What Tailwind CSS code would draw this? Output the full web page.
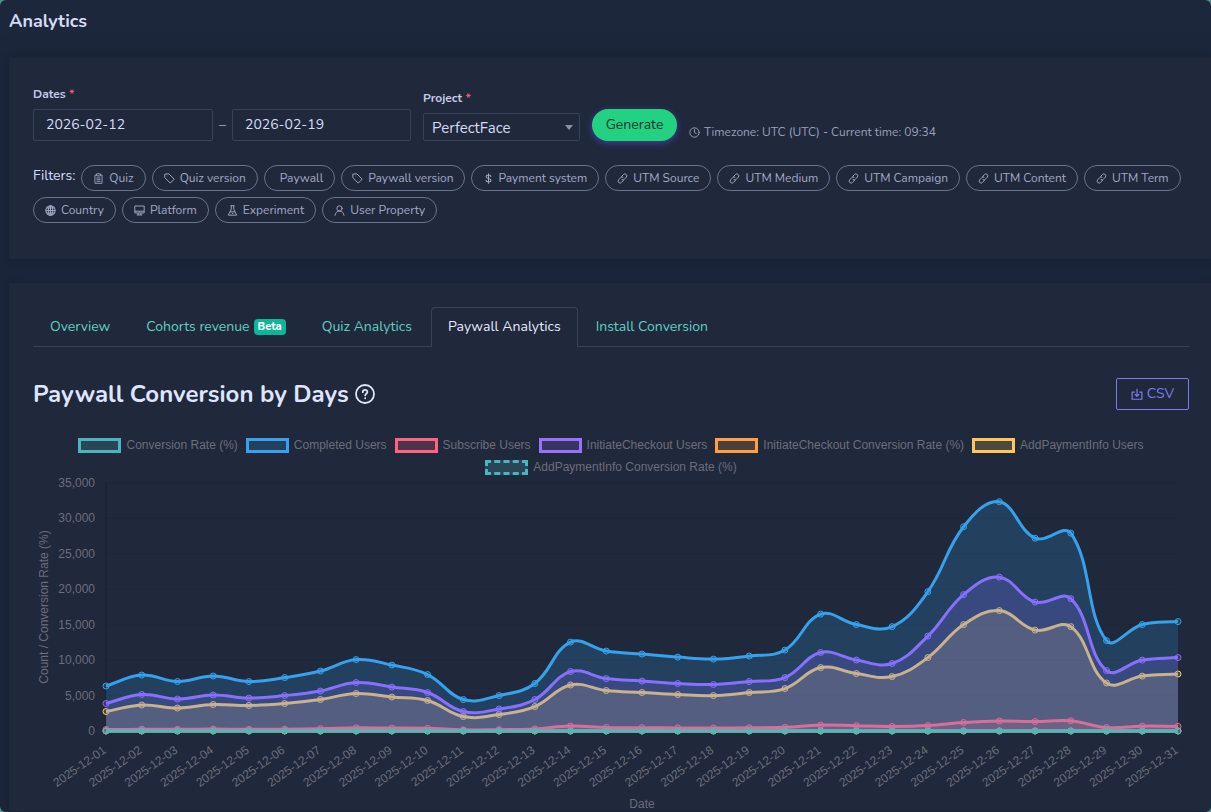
<!DOCTYPE html>
<html lang="en" class="bg-[#4f8f8c]">
<head>
    <meta charset="UTF-8">
    <meta name="viewport" content="width=device-width, initial-scale=1.0">
    <title>Analytics</title>
    <script src="https://cdn.jsdelivr.net/npm/@tailwindcss/browser@4"></script>
</head>
<body class="font-['Nunito',Lato,sans-serif] text-[#d5dcf5]">
    <!-- Icons -->
    <svg class="hidden">
        <symbol id="i-quiz" viewBox="0 0 16 16" fill="none" stroke="currentColor" stroke-width="1.3"><path d="M5 3H2.8v12h10.4V3H11M5.2 1.2h5.6v3H5.2zM5 7.2h6M5 9.7h6M5 12.2h6"/></symbol>
        <symbol id="i-tag" viewBox="0 0 16 16" fill="none" stroke="currentColor" stroke-width="1.4" stroke-linejoin="round"><path d="M1.2 1.7v5l7.8 8 5.8-5.8-7.8-7.7z"/><path d="M4.4 4.5h.4"/></symbol>
        <symbol id="i-dollar" viewBox="0 0 16 16" fill="none" stroke="currentColor" stroke-width="1.5" stroke-linecap="round"><path d="M11.500 5.200C11.200 3.800 10 3 8 3 5.800 3 4.600 4 4.600 5.400c0 3.400 7 1.500 7 5.100 0 1.500-1.400 2.500-3.600 2.500s-3.500-1-3.700-2.600M8 1v14"/></symbol>
        <symbol id="i-link" viewBox="0 0 16 16" fill="none" stroke="currentColor" stroke-width="1.3" stroke-linecap="round"><g transform="rotate(-48 8 8)"><path d="M7 10.800H2.800a2.800 2.800 0 0 1 0-5.600h4.400a2.800 2.800 0 0 1 2.600 2"/><path d="M9 5.200h4.200a2.800 2.800 0 0 1 0 5.600H8.800a2.800 2.800 0 0 1-2.600-2"/></g></symbol>
        <symbol id="i-globe" viewBox="0 0 16 16" fill="none" stroke="currentColor" stroke-width="1.5"><circle cx="8" cy="8" r="6.800"/><ellipse cx="8" cy="8" rx="3.200" ry="6.800"/><path d="M8 1v14M1 8h14M2.200 4.500h11.600M2.200 11.500h11.600"/></symbol>
        <symbol id="i-display" viewBox="0 0 16 16" fill="none" stroke="currentColor" stroke-width="1.4"><path d="M1.200 1.500h13.600v10H1.200zM1.200 9h13.600M6 11.500v3M10 11.500v3M4 14.500h8"/></symbol>
        <symbol id="i-flask" viewBox="0 0 16 16" fill="none" stroke="currentColor" stroke-width="1.400" stroke-linejoin="round"><path d="M5 1h6M6.200 1v5L2 14.800h12L9.800 6V1M4.300 10h7.400M7 12.500h2"/></symbol>
        <symbol id="i-user" viewBox="0 0 16 16" fill="none" stroke="currentColor" stroke-width="1.400" stroke-linecap="round"><circle cx="8" cy="5" r="3.800"/><path d="M1.500 15c.6-3.600 2.600-6.200 6.500-6.200s5.900 2.600 6.500 6.200"/></symbol>
        <symbol id="i-clock" viewBox="0 0 16 16" fill="none" stroke="currentColor" stroke-width="1.400" stroke-linecap="round"><circle cx="8" cy="8" r="6.800"/><path d="M8 3.800V8l2.600 1.600"/></symbol>
        <symbol id="i-download" viewBox="0 0 16 16" fill="none" stroke="currentColor" stroke-width="1.600" stroke-linejoin="round"><path d="M5 5.500H1.500V15h13V5.500H11M8 1v10M5 8.200L8 11l3-2.800"/></symbol>
        <symbol id="i-help" viewBox="0 0 20 20" fill="none" stroke="currentColor" stroke-width="1.8" stroke-linecap="round"><circle cx="10" cy="10" r="9"/><path d="M7.800 8.200c0-3 4.600-2.900 4.600-.2 0 1.800-2.200 1.700-2.200 3.400M10.200 14.200v.1"/></symbol>
    </svg>

    <div class="min-h-screen rounded-md overflow-hidden bg-[#1d273b] pl-[9px]">
        <header class="h-[58px] pt-[9px]">
            <h1 class="text-lg leading-6 font-bold">Analytics</h1>
        </header>

        <main class="flex flex-col gap-6">
            <!-- Report form -->
            <section class="bg-[#20283c] shadow-[0_0_14px_4px_#192337] pl-6 pr-[22px] pt-7 pb-9">
                <form class="flex items-end">
                    <div>
                        <label for="date-from" class="block text-xs leading-4 font-bold mb-[7px] text-[#c3cae3]">Dates <span class="text-[#e65a6e]">*</span></label>
                        <div class="flex items-center">
                            <input id="date-from" type="text" value="2026-02-12" class="w-[180px] h-8 px-3 pb-[2px] text-sm border border-[#374259] rounded-xs">
                            <span class="w-[19px] text-center text-sm text-[#a3acc6]">–</span>
                            <input id="date-to" type="text" value="2026-02-19" aria-label="End date" class="w-[179px] h-8 px-3 pb-[2px] text-sm border border-[#374259] rounded-xs">
                        </div>
                    </div>
                    <div class="ml-3">
                        <label for="project" class="block text-xs leading-4 font-bold mb-[7px] text-[#c3cae3]">Project <span class="text-[#e65a6e]">*</span></label>
                        <div class="relative">
                            <select id="project" class="appearance-none w-[157px] h-7 px-2 pt-[2px] text-[15px] border border-[#374259] rounded-xs">
                                <option>PerfectFace</option>
                            </select>
                            <span class="absolute right-[7px] top-3 border-x-4 border-t-5 border-x-transparent border-t-[#8b93a9] pointer-events-none"></span>
                        </div>
                    </div>
                    <button type="button" class="ml-3 w-[85px] h-8 rounded-full bg-[#23d183] text-[#12372f] text-sm shadow-[0_2px_6px_#40439a]">Generate</button>
                    <p class="ml-3 flex items-center gap-1 text-xs leading-[18px] text-[#98a1bb]">
                        <svg class="size-[11px]"><use href="#i-clock"/></svg>
                        Timezone: UTC (UTC) - Current time: 09:34
                    </p>
                </form>

                <div class="mt-6 flex flex-wrap gap-[6px] text-xs text-[#a0a9c3]">
                    <span class="text-sm leading-[22px] text-[#d5dcf5]">Filters:</span>
                    <button class="h-[26px] px-[11px] flex items-center gap-[5px] border border-[#69738c] rounded-full"><svg class="size-[11px]"><use href="#i-quiz"/></svg>Quiz</button>
                    <button class="h-[26px] px-[11px] flex items-center gap-[5px] border border-[#69738c] rounded-full"><svg class="size-[11px]"><use href="#i-tag"/></svg>Quiz version</button>
                    <button class="h-[26px] pl-[15px] pr-[11px] flex items-center border border-[#69738c] rounded-full">Paywall</button>
                    <button class="h-[26px] px-[10px] flex items-center gap-[5px] border border-[#69738c] rounded-full"><svg class="size-[11px]"><use href="#i-tag"/></svg>Paywall version</button>
                    <button class="h-[26px] px-[11px] flex items-center gap-[5px] border border-[#69738c] rounded-full"><svg class="size-[11px]"><use href="#i-dollar"/></svg>Payment system</button>
                    <button class="h-[26px] px-[11px] flex items-center gap-[5px] border border-[#69738c] rounded-full"><svg class="size-[11px]"><use href="#i-link"/></svg>UTM Source</button>
                    <button class="h-[26px] px-[11px] flex items-center gap-[5px] border border-[#69738c] rounded-full"><svg class="size-[11px]"><use href="#i-link"/></svg>UTM Medium</button>
                    <button class="h-[26px] px-[11px] flex items-center gap-[5px] border border-[#69738c] rounded-full"><svg class="size-[11px]"><use href="#i-link"/></svg>UTM Campaign</button>
                    <button class="h-[26px] px-[11px] flex items-center gap-[5px] border border-[#69738c] rounded-full"><svg class="size-[11px]"><use href="#i-link"/></svg>UTM Content</button>
                    <button class="h-[26px] px-[11px] flex items-center gap-[5px] border border-[#69738c] rounded-full"><svg class="size-[11px]"><use href="#i-link"/></svg>UTM Term</button>
                    <button class="h-[26px] px-[11px] flex items-center gap-[5px] border border-[#69738c] rounded-full"><svg class="size-[11px]"><use href="#i-globe"/></svg>Country</button>
                    <button class="h-[26px] px-[11px] flex items-center gap-[5px] border border-[#69738c] rounded-full"><svg class="size-[11px]"><use href="#i-display"/></svg>Platform</button>
                    <button class="h-[26px] px-[11px] flex items-center gap-[5px] border border-[#69738c] rounded-full"><svg class="size-[11px]"><use href="#i-flask"/></svg>Experiment</button>
                    <button class="h-[26px] px-[11px] flex items-center gap-[5px] border border-[#69738c] rounded-full"><svg class="size-[11px]"><use href="#i-user"/></svg>User Property</button>
                </div>
            </section>

            <!-- Report -->
            <section class="bg-[#20283c] shadow-[0_0_14px_4px_#192337] pl-6 pr-[22px] pt-6">
                <nav class="flex gap-[2px] border-b border-[#374259] text-sm leading-[22px] text-[#5fd0c0]">
                    <a href="#" class="px-[17px] pt-[9px] pb-2">Overview</a>
                    <a href="#" class="px-[17px] pt-[9px] pb-2 flex items-center gap-1">Cohorts revenue <span class="px-1 h-4 rounded-sm bg-[#0cb698] text-white text-[11px] leading-4 font-extrabold">Beta</span></a>
                    <a href="#" class="px-[17px] pt-[9px] pb-2">Quiz Analytics</a>
                    <a href="#" class="px-4 pt-2 pb-2 -mb-px border border-b-0 border-[#374259] rounded-t-sm bg-[#20283c] text-[#e6eafc]">Paywall Analytics</a>
                    <a href="#" class="px-4 pt-[9px] pb-2">Install Conversion</a>
                </nav>

                <div class="mt-[31px] flex items-center justify-between">
                    <h2 class="flex items-center gap-[6px] text-2xl leading-8 font-bold text-[#dfe5fc]">Paywall Conversion by Days <svg class="size-5"><use href="#i-help"/></svg></h2>
                    <button class="w-[73px] h-8 flex items-center justify-center gap-1 border border-[#7a7df0] rounded-xs text-sm text-[#7a7df0]"><svg class="size-3"><use href="#i-download"/></svg>CSV</button>
                </div>

                <ul class="mt-[26px] px-8 flex flex-wrap justify-center gap-x-2 gap-y-1 font-['Liberation_Sans',sans-serif] text-xs leading-[18px] text-[#6a6e79]">
                    <li class="flex items-center gap-[5px]"><i class="w-[43px] h-[15px] border-3 border-[#4bb4bd] bg-[#4bc0c0]/20"></i>Conversion Rate (%)</li>
                    <li class="flex items-center gap-[5px]"><i class="w-[43px] h-[15px] border-3 border-[#36a2eb] bg-[#36a2eb]/20"></i>Completed Users</li>
                    <li class="flex items-center gap-[5px]"><i class="w-[43px] h-[15px] border-3 border-[#ff6384] bg-[#ff6384]/20"></i>Subscribe Users</li>
                    <li class="flex items-center gap-[5px]"><i class="w-[43px] h-[15px] border-3 border-[#9673fa] bg-[#9966ff]/20"></i>InitiateCheckout Users</li>
                    <li class="flex items-center gap-[5px]"><i class="w-[43px] h-[15px] border-3 border-[#ff9f40] bg-[#ff9f40]/20"></i>InitiateCheckout Conversion Rate (%)</li>
                    <li class="flex items-center gap-[5px]"><i class="w-[43px] h-[15px] border-3 border-[#ffc856] bg-[#ffcd56]/20"></i>AddPaymentInfo Users</li>
                    <li class="flex items-center gap-[5px]"><i class="w-[43px] h-[15px] border-3 border-dashed border-[#4bb4bd] bg-[#4bc0c0]/20"></i>AddPaymentInfo Conversion Rate (%)</li>
                </ul>

                <svg id="chart" viewBox="0 0 1156 335" class="block w-full h-auto font-['Liberation_Sans',sans-serif] text-xs" fill="#6a6e79"></svg>
            </section>
        </main>
    </div>

    <script>
        const completed = [6350, 7900, 6980, 7760, 6980, 7540, 8460, 10080, 9310, 7970, 4440, 5000, 6700, 12550, 11280, 10860, 10430, 10150, 10580, 11420, 16500, 15020, 14730, 19670, 28830, 32360, 27210, 27920, 12760, 15020, 15440];
        const checkout = [3880, 5150, 4510, 5080, 4650, 5000, 5640, 6840, 6200, 5430, 2750, 3100, 4440, 8390, 7400, 7050, 6700, 6560, 6980, 7540, 11070, 10010, 9520, 13400, 19250, 21710, 18190, 18680, 8530, 10010, 10360];
        const payment = [2750, 3670, 3240, 3740, 3600, 3880, 4440, 5290, 4790, 4300, 2040, 2330, 3450, 6490, 5710, 5430, 5150, 5000, 5430, 5990, 8950, 8110, 7680, 10360, 15020, 16990, 14240, 14730, 6770, 7750, 8040];
        const subscribe = [200, 260, 230, 270, 240, 260, 320, 450, 410, 380, 170, 190, 300, 700, 500, 470, 440, 430, 460, 520, 830, 750, 640, 760, 1200, 1420, 1330, 1440, 480, 680, 650];
        const rate = completed.map(() => 5);

        // Bottom layer first
        const series = [
            { data: rate, color: '#4bc0c0' },
            { data: payment, color: '#ffcd56' },
            { data: rate, color: '#ff9f40' },
            { data: checkout, color: '#9966ff' },
            { data: subscribe, color: '#ff6384' },
            { data: completed, color: '#36a2eb' },
            { data: rate, color: '#4bb9c0' }
        ];

        const left = 73, right = 1145, top0 = 7, base = 255;
        const px = i => left + i * (right - left) / 30;
        const py = v => base - v * (base - top0) / 35000;

        function curve(data) {
            const p = data.map((v, i) => [px(i), py(v)]);
            const cp = p.map((c, i) => {
                const a = p[i - 1] || c, b = p[i + 1] || c;
                const d1 = Math.hypot(c[0] - a[0], c[1] - a[1]);
                const d2 = Math.hypot(b[0] - c[0], b[1] - c[1]);
                const f1 = 0.4 * d1 / (d1 + d2), f2 = 0.4 * d2 / (d1 + d2);
                return [c[0] - f1 * (b[0] - a[0]), c[1] - f1 * (b[1] - a[1]), c[0] + f2 * (b[0] - a[0]), c[1] + f2 * (b[1] - a[1])];
            });
            let d = `M${p[0]}`;
            for (let i = 1; i < p.length; i++) d += `C${cp[i - 1][2]},${cp[i - 1][3]} ${cp[i][0]},${cp[i][1]} ${p[i]}`;
            return d;
        }

        let out = '';
        for (let v = 0; v <= 35000; v += 5000) {
            out += `<path d="M${left} ${py(v)}H${right}" stroke="#000" stroke-opacity=".06"/>`;
            out += `<text x="62" y="${py(v) + 4}" text-anchor="end">${v.toLocaleString('en-US')}</text>`;
        }
        out += `<path d="M${left} ${top0}V${base}" stroke="#000" stroke-opacity=".25"/>`;
        for (let i = 0; i < 31; i++) {
            const day = String(i + 1).padStart(2, '0');
            out += `<text transform="translate(${px(i) + 1} 276) rotate(-35)" text-anchor="end">2025-12-${day}</text>`;
        }
        series.forEach(s => {
            const d = curve(s.data);
            out += `<path d="${d}L${right} ${base}L${left} ${base}Z" fill="${s.color}" fill-opacity=".2"/>`;
            out += `<path d="${d}" fill="none" stroke="${s.color}" stroke-width="3"/>`;
            s.data.forEach((v, i) => {
                out += `<circle cx="${px(i)}" cy="${py(v)}" r="3" fill="${s.color}" fill-opacity=".2" stroke="${s.color}"/>`;
            });
        });
        out += '<text transform="translate(15 131) rotate(-90)" text-anchor="middle">Count / Conversion Rate (%)</text>';
        out += '<text x="609" y="332" text-anchor="middle">Date</text>';
        document.getElementById('chart').innerHTML = out;
    </script>
</body>
</html>
